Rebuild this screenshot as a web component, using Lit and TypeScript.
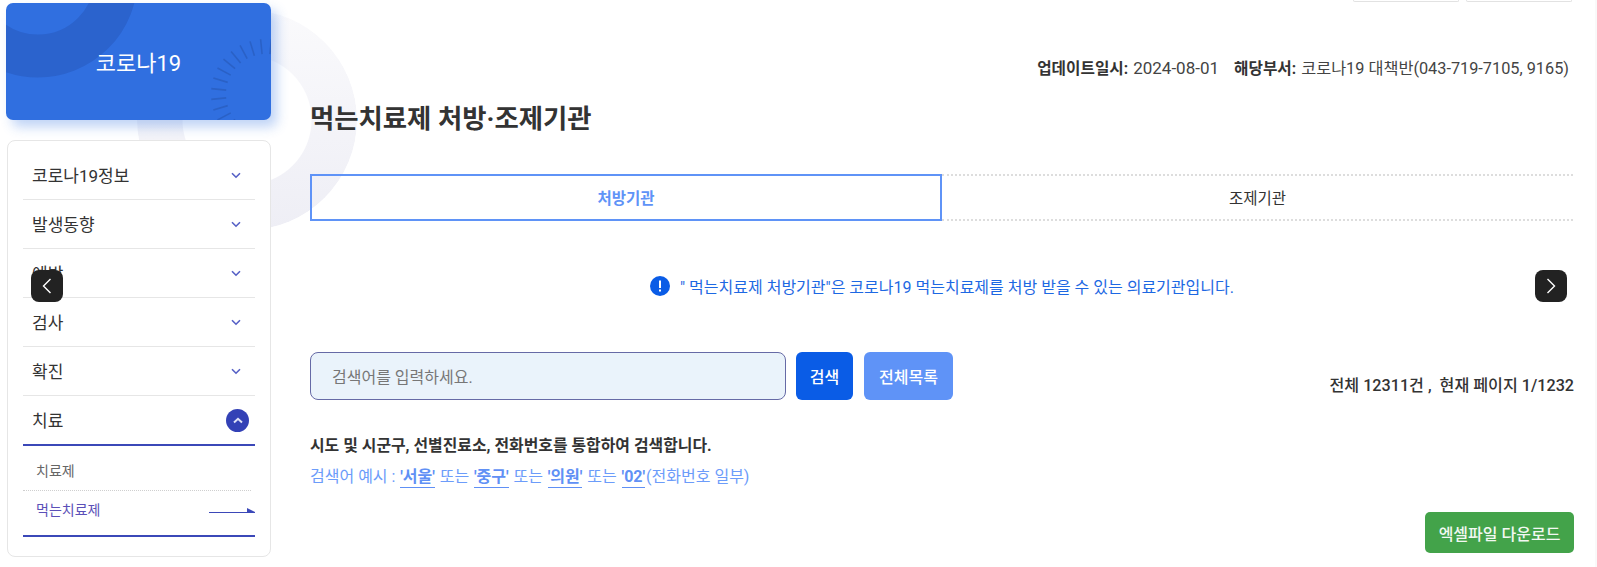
import { LitElement, html, css, svg } from "lit";
import { customElement } from "lit/decorators.js";

const menu = ["코로나19정보", "발생동향", "예방", "검사", "확진"];

const ticks = Array.from({ length: 32 }, (_, i) => {
  const a = ((5.625 + 11.25 * i) * Math.PI) / 180;
  const cx = 260;
  const cy = 91;
  return svg`<line x1=${cx + Math.cos(a) * 40} y1=${cy + Math.sin(a) * 40} x2=${cx + Math.cos(a) * 55} y2=${cy + Math.sin(a) * 55}></line>`;
});

@customElement("app-root")
export class AppRoot extends LitElement {
  static styles = css`
    :host {
      display: block;
      position: relative;
      height: 567px;
      overflow: hidden;
      background: #fff;
      color: #333;
      font-family: Roboto, "Noto Sans CJK KR", sans-serif;
    }
    .ring {
      position: absolute;
      left: 137px;
      top: 10px;
      width: 220px;
      height: 220px;
      border-radius: 50%;
      background: linear-gradient(#fafafc, #eeeef5);
      -webkit-mask: radial-gradient(circle, transparent 64px, #000 65px);
      mask: radial-gradient(circle, transparent 64px, #000 65px);
    }
    .edge {
      position: absolute;
      right: 0;
      top: 0;
      bottom: 0;
      width: 2px;
      background: #f9f9f9;
    }
    .page {
      position: relative;
      display: flex;
      align-items: flex-start;
    }
    aside {
      width: 265px;
      margin-left: 6px;
      padding-top: 3px;
      flex: none;
    }
    .hero {
      position: relative;
      height: 117px;
      border-radius: 7px;
      background: #306fe0;
      box-shadow: 6px 7px 12px rgba(48, 111, 224, 0.3);
      color: #fff;
      font-size: 22px;
      display: flex;
      align-items: center;
      justify-content: center;
      overflow: hidden;
    }
    .hero svg {
      position: absolute;
      inset: 0;
      width: 100%;
      height: 100%;
    }
    .hero span {
      position: relative;
      margin-top: -2px;
    }
    .band {
      fill: none;
      stroke: #2b63cd;
      stroke-width: 43px;
    }
    .ticks line {
      stroke: #2a61c6;
      stroke-width: 1.6px;
    }
    nav {
      margin: 20px 0 0 1px;
      box-sizing: border-box;
      height: 417px;
      background: #fff;
      border: 1px solid #e6e6e6;
      border-radius: 8px;
      padding: 10px 15px 0;
    }
    .item {
      height: 49px;
      box-sizing: border-box;
      border-bottom: 1px solid #e6e6e6;
      padding-left: 9px;
      display: flex;
      align-items: center;
      justify-content: space-between;
      font-size: 17px;
      color: #333;
    }
    .item > span:first-child {
      margin-top: -2px;
    }
    .item svg {
      width: 10px;
      height: 7px;
      margin-right: 14px;
      fill: none;
      stroke: #5560c6;
      stroke-width: 1.6px;
    }
    .item.open {
      height: 50px;
      border-bottom: 2px solid #3b48b8;
    }
    .badge {
      width: 23px;
      height: 23px;
      margin-right: 6px;
      border-radius: 50%;
      background: #3341b6;
      display: flex;
      align-items: center;
      justify-content: center;
    }
    .item .badge svg {
      margin: 0;
      width: 10px;
      height: 7px;
      stroke: #dfe2f7;
      stroke-width: 2px;
    }
    .sub {
      border-bottom: 2px solid #3b48b8;
      font-size: 14px;
    }
    .off {
      box-sizing: border-box;
      height: 45px;
      margin-right: 4px;
      padding: 3px 0 0 13px;
      display: flex;
      align-items: center;
      border-bottom: 1px dotted #cfcfcf;
      color: #666;
    }
    .on {
      box-sizing: border-box;
      height: 44px;
      padding: 0 0 8px 13px;
      display: flex;
      align-items: center;
      justify-content: space-between;
      color: #5b50b8;
    }
    .on svg {
      width: 46px;
      height: 6px;
      margin-top: 2px;
      fill: #3b48b8;
    }
    main {
      margin-left: 39px;
      width: 1264px;
      flex: none;
    }
    .stubs {
      height: 2px;
      display: flex;
      justify-content: flex-end;
      gap: 7px;
      padding-right: 2px;
    }
    .stubs i {
      width: 106px;
      height: 2px;
      box-sizing: border-box;
      border: 1px solid #e2e2e2;
      border-top: 0;
      border-radius: 0 0 4px 4px;
    }
    .meta {
      margin-top: 55px;
      height: 20px;
      padding-right: 5px;
      display: flex;
      justify-content: flex-end;
      align-items: center;
      font-size: 16.3px;
      color: #444;
    }
    .meta b {
      color: #333;
      font-size: 15.7px;
      font-weight: 700;
      margin-right: 5px;
    }
    .meta span {
      margin-right: 15px;
    }
    .meta span:last-child {
      margin-right: 0;
    }
    .meta .date {
      margin: 0;
      font-size: 17px;
    }
    h1 {
      margin: 24px 0 0;
      height: 36px;
      line-height: 36px;
      font-size: 26.4px;
      font-weight: 700;
      color: #333;
    }
    .tabs {
      margin-top: 37px;
      height: 47px;
      display: flex;
      font-size: 15.5px;
    }
    .tabs div {
      box-sizing: border-box;
      padding-bottom: 2px;
      display: flex;
      align-items: center;
      justify-content: center;
    }
    .tab-on {
      width: 632px;
      border: 2px solid #5f93f7;
      color: #5f93f7;
      font-weight: 700;
    }
    .tab-off {
      flex: 1;
      margin-right: 1px;
      border-top: 2px dotted #ddd;
      border-bottom: 2px dotted #ddd;
      color: #333;
    }
    .notice {
      margin-top: 47px;
      height: 36px;
      display: flex;
      align-items: center;
      padding-left: 340px;
      font-size: 16px;
      color: #1d68e3;
      gap: 10px;
    }
    .notice svg {
      width: 20px;
      height: 20px;
      flex: none;
    }
    .search {
      margin-top: 48px;
      height: 48px;
      display: flex;
      gap: 10px;
    }
    .field {
      width: 476px;
      box-sizing: border-box;
      background: #eaf3fb;
      border: 1.5px solid #666aa6;
      border-radius: 8px;
      padding-left: 21px;
      font-size: 16px;
      color: #777;
      display: flex;
      align-items: center;
    }
    .btn {
      border-radius: 6px;
      color: #fff;
      font-size: 16px;
      font-weight: 500;
      display: flex;
      align-items: center;
      justify-content: center;
    }
    .go {
      width: 57px;
      background: #0a5ce6;
    }
    .all {
      width: 89px;
      margin-left: 1px;
      background: #5f93f7;
    }
    .count {
      margin-left: auto;
      align-self: flex-end;
      margin-bottom: 2px;
      line-height: 24px;
      font-size: 16.15px;
      font-weight: 500;
      color: #333;
    }
    .hint {
      margin-top: 34px;
      line-height: 24px;
      font-size: 15.9px;
      font-weight: 700;
      color: #333;
    }
    .example {
      margin-top: 7px;
      line-height: 24px;
      font-size: 16px;
      color: #6c9cfa;
    }
    .example b {
      margin: 0 1px 0 0.8px;
      font-weight: 700;
      color: #6090f5;
      border-bottom: 1px solid #6090f5;
      padding-bottom: 1px;
    }
    .foot {
      margin-top: 23px;
      display: flex;
      justify-content: flex-end;
    }
    .excel {
      width: 149px;
      height: 41px;
      border-radius: 5px;
      background: #43a34a;
      color: #f2f8f2;
    }
    .arrow {
      position: absolute;
      top: 270px;
      width: 32px;
      height: 32px;
      border-radius: 8px;
      background: #222;
      display: flex;
      align-items: center;
      justify-content: center;
    }
    .arrow svg {
      width: 10px;
      height: 16px;
      fill: none;
      stroke: #fff;
      stroke-width: 1.4px;
    }
    .prev {
      left: 31px;
    }
    .next {
      left: 1535px;
    }
  `;

  private chevron() {
    return html`<svg viewBox="0 0 10 7"><path d="M1 1.2 5 5.2 9 1.2"></path></svg>`;
  }

  render() {
    return html`
      <div class="ring"></div>
      <div class="edge"></div>
      <div class="page">
        <aside>
          <div class="hero">
            <svg viewBox="0 0 265 117">
              <circle class="band" cx="32" cy="-25" r="78"></circle>
              <g class="ticks">${ticks}</g>
            </svg>
            <span>코로나19</span>
          </div>
          <nav>
            ${menu.map((m) => html`<div class="item"><span>${m}</span>${this.chevron()}</div>`)}
            <div class="item open">
              <span>치료</span>
              <span class="badge"><svg viewBox="0 0 10 7"><path d="M1 5.5 5 1.8 9 5.5"></path></svg></span>
            </div>
            <div class="sub">
              <div class="off">치료제</div>
              <div class="on">
                <span>먹는치료제</span>
                <svg viewBox="0 0 46 6"><path d="M0 5h38V1l8 4v1H0z"></path></svg>
              </div>
            </div>
          </nav>
        </aside>
        <main>
          <div class="stubs"><i></i><i></i></div>
          <div class="meta">
            <span><b>업데이트일시:</b><span class="date">2024-08-01</span></span>
            <span><b>해당부서:</b>코로나19 대책반(043-719-7105, 9165)</span>
          </div>
          <h1>먹는치료제 처방·조제기관</h1>
          <div class="tabs">
            <div class="tab-on">처방기관</div>
            <div class="tab-off">조제기관</div>
          </div>
          <div class="notice">
            <svg viewBox="0 0 20 20">
              <circle cx="10" cy="10" r="10" fill="#0a5ce6"></circle>
              <rect x="9" y="4.5" width="2" height="7.5" fill="#fff"></rect>
              <rect x="9" y="13.5" width="2" height="2" fill="#fff"></rect>
            </svg>
            <span>" 먹는치료제 처방기관"은 코로나19 먹는치료제를 처방 받을 수 있는 의료기관입니다.</span>
          </div>
          <div class="search">
            <div class="field">검색어를 입력하세요.</div>
            <div class="btn go">검색</div>
            <div class="btn all">전체목록</div>
            <div class="count">전체 12311건 , &nbsp;현재 페이지 1/1232</div>
          </div>
          <div class="hint">시도 및 시군구, 선별진료소, 전화번호를 통합하여 검색합니다.</div>
          <div class="example">
            검색어 예시 : <b>'서울'</b> 또는 <b>'중구'</b> 또는 <b>'의원'</b> 또는 <b>'02'</b>(전화번호 일부)
          </div>
          <div class="foot"><div class="btn excel">엑셀파일 다운로드</div></div>
        </main>
      </div>
      <div class="arrow prev"><svg viewBox="0 0 10 16"><path d="M8.5 1 1.5 8l7 7"></path></svg></div>
      <div class="arrow next"><svg viewBox="0 0 10 16"><path d="M1.5 1l7 7-7 7"></path></svg></div>
    `;
  }
}
